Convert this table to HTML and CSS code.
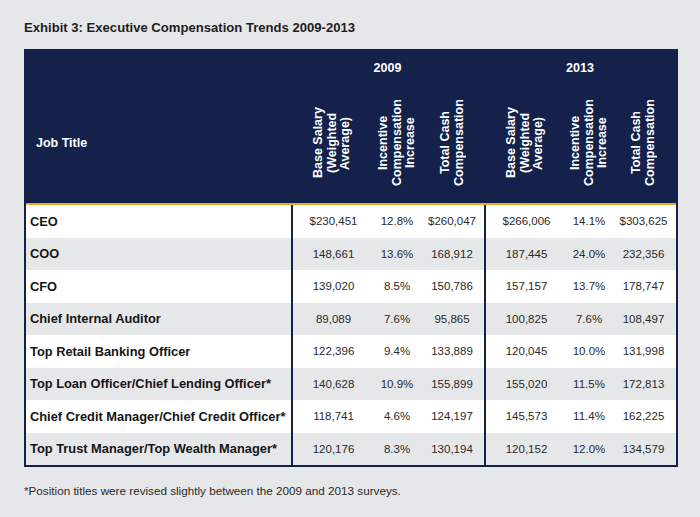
FILE: index.html
```html
<!DOCTYPE html>
<html>
<head>
<meta charset="utf-8">
<link rel="stylesheet" href="styles.css">
</head>
<body>
<div class="page">
  <h1 class="title">Exhibit 3: Executive Compensation Trends 2009-2013</h1>
  <div class="table">
    <div class="head">
      <div class="row years">
        <div class="cell label"></div>
        <div class="cell year span3 grp">2009</div>
        <div class="cell year span3 grp">2013</div>
      </div>
      <div class="row rot-row">
        <div class="cell label head-label">Job Title</div>
        <div class="cell grp"><div class="rot">Base Salary<br>(Weighted<br>Average)</div></div>
        <div class="cell"><div class="rot">Incentive<br>Compensation<br>Increase</div></div>
        <div class="cell"><div class="rot">Total Cash<br>Compensation</div></div>
        <div class="cell grp"><div class="rot">Base Salary<br>(Weighted<br>Average)</div></div>
        <div class="cell"><div class="rot">Incentive<br>Compensation<br>Increase</div></div>
        <div class="cell"><div class="rot">Total Cash<br>Compensation</div></div>
      </div>
    </div>
    <div class="body">
      <div class="row data">
        <div class="cell label">CEO</div>
        <div class="cell num grp line">$230,451</div><div class="cell num">12.8%</div><div class="cell num">$260,047</div>
        <div class="cell num grp line">$266,006</div><div class="cell num">14.1%</div><div class="cell num">$303,625</div>
      </div>
      <div class="row data alt">
        <div class="cell label">COO</div>
        <div class="cell num grp line">148,661</div><div class="cell num">13.6%</div><div class="cell num">168,912</div>
        <div class="cell num grp line">187,445</div><div class="cell num">24.0%</div><div class="cell num">232,356</div>
      </div>
      <div class="row data">
        <div class="cell label">CFO</div>
        <div class="cell num grp line">139,020</div><div class="cell num">8.5%</div><div class="cell num">150,786</div>
        <div class="cell num grp line">157,157</div><div class="cell num">13.7%</div><div class="cell num">178,747</div>
      </div>
      <div class="row data alt">
        <div class="cell label">Chief Internal Auditor</div>
        <div class="cell num grp line">89,089</div><div class="cell num">7.6%</div><div class="cell num">95,865</div>
        <div class="cell num grp line">100,825</div><div class="cell num">7.6%</div><div class="cell num">108,497</div>
      </div>
      <div class="row data">
        <div class="cell label">Top Retail Banking Officer</div>
        <div class="cell num grp line">122,396</div><div class="cell num">9.4%</div><div class="cell num">133,889</div>
        <div class="cell num grp line">120,045</div><div class="cell num">10.0%</div><div class="cell num">131,998</div>
      </div>
      <div class="row data alt">
        <div class="cell label">Top Loan Officer/Chief Lending Officer*</div>
        <div class="cell num grp line">140,628</div><div class="cell num">10.9%</div><div class="cell num">155,899</div>
        <div class="cell num grp line">155,020</div><div class="cell num">11.5%</div><div class="cell num">172,813</div>
      </div>
      <div class="row data">
        <div class="cell label">Chief Credit Manager/Chief Credit Officer*</div>
        <div class="cell num grp line">118,741</div><div class="cell num">4.6%</div><div class="cell num">124,197</div>
        <div class="cell num grp line">145,573</div><div class="cell num">11.4%</div><div class="cell num">162,225</div>
      </div>
      <div class="row data alt">
        <div class="cell label">Top Trust Manager/Top Wealth Manager*</div>
        <div class="cell num grp line">120,176</div><div class="cell num">8.3%</div><div class="cell num">130,194</div>
        <div class="cell num grp line">120,152</div><div class="cell num">12.0%</div><div class="cell num">134,579</div>
      </div>
    </div>
  </div>
  <p class="note">*Position titles were revised slightly between the 2009 and 2013 surveys.</p>
</div>
</body>
</html>
```

FILE: styles.css
```css
html, body {
  margin: 0;
  padding: 0;
  background: #e6e7e9;
}
body {
  font-family: "Liberation Sans", Arial, Helvetica, sans-serif;
  color: #1b1b1b;
}
.page {
  padding: 19px 0 0 24px;
}
.title {
  margin: 0;
  font-size: 13.1px;
  line-height: 18px;
  font-weight: bold;
  color: #1e1e1e;
}
.table {
  margin-top: 12px;
  width: 654px;
  box-sizing: border-box;
  border: 2px solid #14224b;
  background: #fff;
}
.row {
  display: grid;
  grid-template-columns: 265px 83px 46px 64px 83px 44px 65px;
}
.head {
  background: #13214b;
  color: #fff;
  border-bottom: 2px solid #f2a823;
}
.years {
  height: 32px;
}
.years .span3 {
  grid-column: span 3;
}
.year {
  font-weight: bold;
  font-size: 12.5px;
  display: flex;
  align-items: center;
  justify-content: center;
  padding-top: 1px;
}
.rot-row {
  height: 120px;
}
.rot-row .cell {
  display: flex;
  align-items: center;
  justify-content: center;
}
.head-label {
  justify-content: flex-start !important;
  padding-left: 10px;
  font-weight: bold;
  font-size: 12.5px;
}
.rot {
  writing-mode: vertical-rl;
  transform: rotate(180deg);
  height: 120px;
  text-align: center;
  font-weight: bold;
  font-size: 12.5px;
  line-height: 13.5px;
}
.data {
  height: 32.5px;
}
.data.alt {
  background: #e6e7e9;
}
.data .cell {
  display: flex;
  align-items: center;
}
.data .label {
  padding-left: 4px;
  font-weight: bold;
  font-size: 12.85px;
  color: #161616;
}
.num {
  justify-content: center;
  font-size: 11.5px;
  color: #2a2a2a;
}
.line {
  border-left: 2px solid #14224b;
}
.note {
  margin: 17px 0 0 0;
  font-size: 11.7px;
  line-height: 14px;
  color: #2a2a2a;
}
```
